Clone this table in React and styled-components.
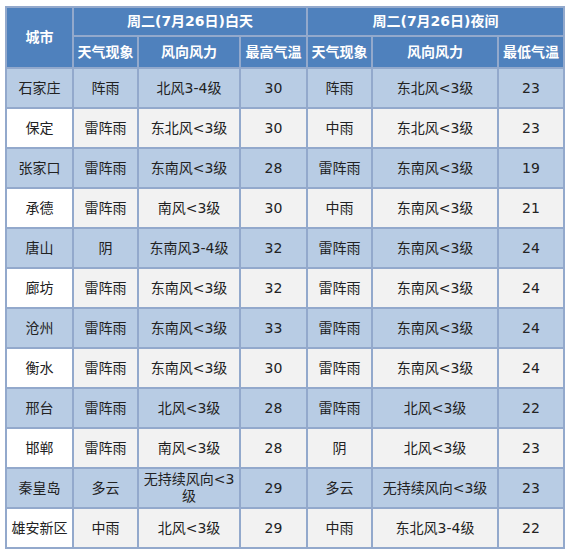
import React from "react";
import styled, { createGlobalStyle } from "styled-components";

const Global = createGlobalStyle`
  html, body { margin: 0; padding: 0; background: #ffffff; }
  body { font-family: "DejaVu Sans", "Noto Sans CJK SC", sans-serif; }
`;

const Page = styled.div`
  padding: 6px 0 0 5px;
`;

const Table = styled.table`
  border-collapse: collapse;
  table-layout: fixed;
  width: 560px;
  border: 2px solid #93a9cc;
  font-size: 14px;
  color: #222;
`;

const HeadCell = styled.th`
  background: #4f81bd;
  color: #ffffff;
  font-weight: bold;
  border: 2px solid #93a9cc;
  padding: 0 1px;
  text-align: center;
  vertical-align: middle;
  line-height: 17px;
  white-space: nowrap;
`;

const HeadRow = styled.tr`
  height: ${(p) => p.$h}px;
`;

const Row = styled.tr`
  height: 40px;
`;

const Cell = styled.td`
  border: 2px solid #93a9cc;
  padding: 0 3px;
  text-align: center;
  vertical-align: middle;
  line-height: 17px;
  background: ${(p) => (p.$odd ? "#b8cce4" : p.$first ? "#ffffff" : "#f2f2f2")};
`;

const widths = [67, 65, 102, 67, 65, 126, 66];

const rows = [
  ["石家庄", "阵雨", "北风3-4级", "30", "阵雨", "东北风<3级", "23"],
  ["保定", "雷阵雨", "东北风<3级", "30", "中雨", "东北风<3级", "23"],
  ["张家口", "雷阵雨", "东南风<3级", "28", "雷阵雨", "东南风<3级", "19"],
  ["承德", "雷阵雨", "南风<3级", "30", "中雨", "东南风<3级", "21"],
  ["唐山", "阴", "东南风3-4级", "32", "雷阵雨", "东南风<3级", "24"],
  ["廊坊", "雷阵雨", "东南风<3级", "32", "雷阵雨", "东南风<3级", "24"],
  ["沧州", "雷阵雨", "东南风<3级", "33", "雷阵雨", "东南风<3级", "24"],
  ["衡水", "雷阵雨", "东南风<3级", "30", "雷阵雨", "东南风<3级", "24"],
  ["邢台", "雷阵雨", "北风<3级", "28", "雷阵雨", "北风<3级", "22"],
  ["邯郸", "雷阵雨", "南风<3级", "28", "阴", "北风<3级", "23"],
  ["秦皇岛", "多云", "无持续风向<3级", "29", "多云", "无持续风向<3级", "23"],
  ["雄安新区", "中雨", "北风<3级", "29", "中雨", "东北风3-4级", "22"],
];

export default function App() {
  return (
    <Page>
      <Global />
      <Table>
        <colgroup>
          {widths.map((w, i) => (
            <col key={i} style={{ width: w }} />
          ))}
        </colgroup>
        <thead>
          <HeadRow $h={29}>
            <HeadCell rowSpan={2}>城市</HeadCell>
            <HeadCell colSpan={3}>周二(7月26日)白天</HeadCell>
            <HeadCell colSpan={3}>周二(7月26日)夜间</HeadCell>
          </HeadRow>
          <HeadRow $h={32}>
            <HeadCell>天气现象</HeadCell>
            <HeadCell>风向风力</HeadCell>
            <HeadCell>最高气温</HeadCell>
            <HeadCell>天气现象</HeadCell>
            <HeadCell>风向风力</HeadCell>
            <HeadCell>最低气温</HeadCell>
          </HeadRow>
        </thead>
        <tbody>
          {rows.map((r, i) => (
            <Row key={i}>
              {r.map((c, j) => (
                <Cell key={j} $odd={i % 2 === 0} $first={j === 0}>
                  {c}
                </Cell>
              ))}
            </Row>
          ))}
        </tbody>
      </Table>
    </Page>
  );
}
